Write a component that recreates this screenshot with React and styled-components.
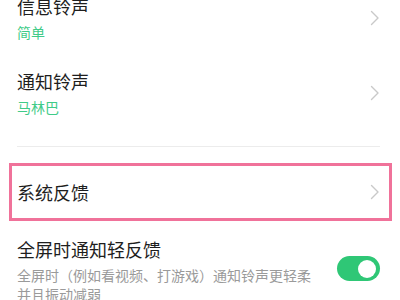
import React from 'react';
import styled, { createGlobalStyle } from 'styled-components';

const GlobalStyle = createGlobalStyle`
	html, body {
		margin: 0;
		padding: 0;
		background: #ffffff;
		overflow: hidden;
	}
	body {
		font-family: "Noto Sans CJK SC", "Noto Sans", sans-serif;
	}
`;

const Chevron = () => (
	<svg width='10' height='16' viewBox='0 0 10 16' fill='none'>
		<path d='M1.5 1.5 L8 8 L1.5 14.5' stroke='#c9c9c9' strokeWidth='1.4' strokeLinecap='round' strokeLinejoin='round' />
	</svg>
);

export default function App() {
	return (
		<>
			<GlobalStyle />
			<StyledPage>
				<Section>
					<Row>
						<TextCol>
							<Title>信息铃声</Title>
							<Sub>简单</Sub>
						</TextCol>
						<Chevron />
					</Row>
					<Row>
						<TextCol>
							<Title>通知铃声</Title>
							<Sub>马林巴</Sub>
						</TextCol>
						<Chevron />
					</Row>
				</Section>
				<Divider />
				<Highlight>
					<PlainRow>
						<Title>系统反馈</Title>
						<Chevron />
					</PlainRow>
				</Highlight>
				<ToggleRow>
					<TextCol>
						<Title>全屏时通知轻反馈</Title>
						<Desc>全屏时（例如看视频、打游戏）通知铃声更轻柔并且振动减弱</Desc>
					</TextCol>
					<Toggle $on />
				</ToggleRow>
			</StyledPage>
		</>
	);
}

const StyledPage = styled.div`
	width: 400px;
	margin-top: -20px;
	display: flex;
	flex-direction: column;
`;

const Section = styled.div`
	display: flex;
	flex-direction: column;
	padding-bottom: 16px;
`;

const Row = styled.div`
	display: flex;
	align-items: center;
	justify-content: space-between;
	padding: 13.5px 20px 13.5px 17px;
`;

const TextCol = styled.div`
	display: flex;
	flex-direction: column;
`;

const Title = styled.div`
	font-size: 18px;
	line-height: 24px;
	color: #1e1e1e;
`;

const Sub = styled.div`
	margin-top: 4px;
	font-size: 14px;
	line-height: 20px;
	color: #3fcb88;
`;

const Divider = styled.div`
	height: 1px;
	margin: 0 20px 0 17px;
	background: #ececec;
`;

const Highlight = styled.div`
	margin: 16px 8px 0 9px;
	border: 3px solid #f0729a;
`;

const PlainRow = styled.div`
	display: flex;
	align-items: center;
	justify-content: space-between;
	padding: 14px 9px 14px 5px;
`;

const ToggleRow = styled.div`
	display: flex;
	align-items: center;
	justify-content: space-between;
	padding: 16px 20px 0 17px;
`;

const Desc = styled.div`
	width: 300px;
	margin-top: 5px;
	font-size: 14px;
	line-height: 19px;
	color: #9a9a9a;
`;

const Toggle = styled.div`
	position: relative;
	width: 43px;
	height: 25px;
	border-radius: 13px;
	background: ${(p) => (p.$on ? '#2fc776' : '#dcdcdc')};
	margin-top: -4px;

	&::after {
		content: '';
		position: absolute;
		top: 3.5px;
		${(p) => (p.$on ? 'right: 4px;' : 'left: 4px;')}
		width: 18px;
		height: 18px;
		border-radius: 50%;
		background: #ffffff;
	}
`;
